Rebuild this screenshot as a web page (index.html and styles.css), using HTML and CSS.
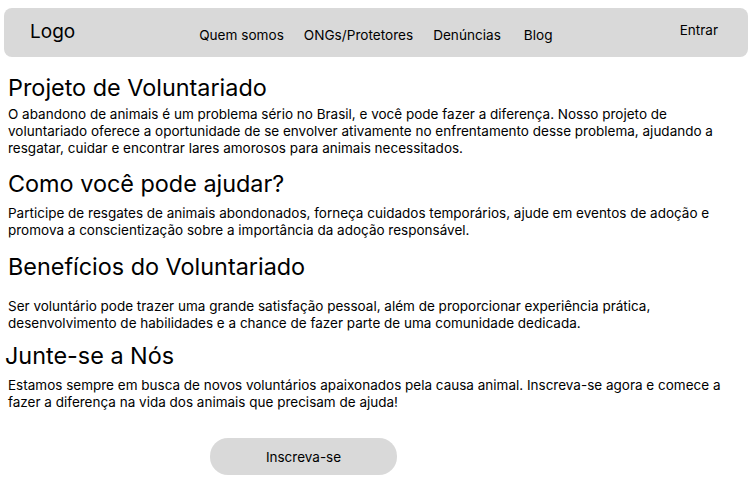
FILE: index.html
```html
<!DOCTYPE html>
<html lang="pt-BR">
<head>
<meta charset="utf-8">
<link rel="stylesheet" href="styles.css">
</head>
<body>
<header class="navbar">
  <div class="logo">Logo</div>
  <nav class="links">
    <a class="link">Quem somos</a>
    <a class="link">ONGs/Protetores</a>
    <a class="link">Denúncias</a>
    <a class="link blog">Blog</a>
  </nav>
  <a class="login">Entrar</a>
</header>
<main class="content">
  <h1 class="title t1">Projeto de Voluntariado</h1>
  <p class="text p1">O abandono de animais é um problema sério no Brasil, e você pode fazer a diferença. Nosso projeto de voluntariado oferece a oportunidade de se envolver ativamente no enfrentamento desse problema, ajudando a resgatar, cuidar e encontrar lares amorosos para animais necessitados.</p>
  <h2 class="title t2">Como você pode ajudar?</h2>
  <p class="text p2">Participe de resgates de animais abondonados, forneça cuidados temporários, ajude em eventos de adoção e promova a conscientização sobre a importância da adoção responsável.</p>
  <h2 class="title t3">Benefícios do Voluntariado</h2>
  <p class="text p3">Ser voluntário pode trazer uma grande satisfação pessoal, além de proporcionar experiência prática, desenvolvimento de habilidades e a chance de fazer parte de uma comunidade dedicada.</p>
  <h2 class="title t4">Junte-se a Nós</h2>
  <p class="text p4">Estamos sempre em busca de novos voluntários apaixonados pela causa animal. Inscreva-se agora e comece a fazer a diferença na vida dos animais que precisam de ajuda!</p>
  <div class="cta-row"><button class="cta">Inscreva-se</button></div>
</main>
</body>
</html>
```

FILE: styles.css
```css
* { box-sizing: border-box; }
html, body { margin: 0; padding: 0; background: #fff; }
body {
  font-family: Inter, "Noto Sans", sans-serif;
  color: #000;
  width: 753px;
  height: 485px;
  overflow: hidden;
}
.navbar {
  margin: 8px 5px 0 4px;
  height: 49px;
  background: #d9d9d9;
  border-radius: 8px;
  display: flex;
  align-items: flex-start;
}
.logo {
  font-size: 19px;
  line-height: 24px;
  margin: 12px 0 0 26px;
}
.links {
  display: flex;
  gap: 20px;
  margin: 19px 0 0 124px;
}
.link {
  font-size: 13.6px;
  line-height: 17px;
  color: #000;
}
.blog { margin-left: 3px; }
.login {
  font-size: 13.5px;
  line-height: 17px;
  margin: 14px 0 0 auto;
  margin-right: 30px;
  color: #000;
}
.content { padding: 0 8px; }
.title {
  font-weight: 400;
  font-size: 23.4px;
  line-height: 29px;
  margin: 0;
}
.text {
  font-size: 13.5px;
  line-height: 17px;
  margin: 0;
}
.t1 { margin-top: 16px; }
.p1 { margin-top: 4px; }
.t2 { margin-top: 12px; }
.p2 { margin-top: 7px; }
.t3 { margin-top: 13px; }
.p3 { margin-top: 17px; }
.t4 { margin-top: 9px; margin-left: -3px; }
.p4 { margin-top: 7px; }
.cta-row { display: flex; padding-left: 202px; margin-top: 27px; }
.cta {
  width: 187px;
  height: 37px;
  border: none;
  border-radius: 18px;
  background: #d9d9d9;
  font-family: Inter, sans-serif;
  font-size: 13.5px;
  color: #000;
  padding: 0;
}
```
